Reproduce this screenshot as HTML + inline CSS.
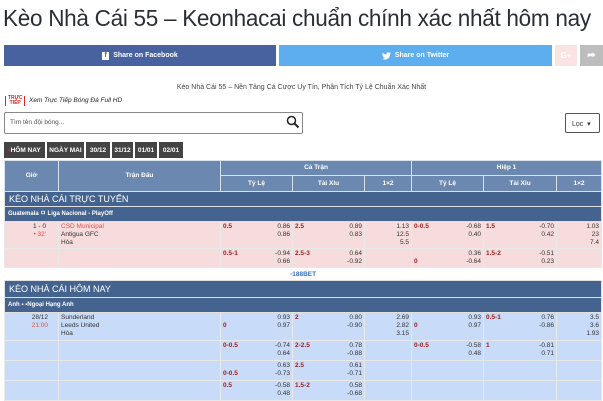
<!DOCTYPE html><html><head><meta charset="utf-8"><style>
*{margin:0;padding:0;box-sizing:border-box}
body{width:603px;height:400px;overflow:hidden;background:#fff;font-family:"Liberation Sans",sans-serif;position:relative;color:#333}
.a{position:absolute}
h1{position:absolute;left:3px;top:5px;font-size:23px;font-weight:normal;color:#2a2f35;letter-spacing:-0.3px;white-space:nowrap;transform:scaleX(0.98);transform-origin:left top}
.btn{position:absolute;top:45px;height:21px;color:#fff;font-size:7px;font-weight:bold;display:flex;align-items:center;justify-content:center;gap:4px}
table{position:absolute;left:4px;border-collapse:collapse;table-layout:fixed;width:597px;font-size:6.5px}
td{border:1px solid #e8e8e8;vertical-align:top;padding:1px 2px;line-height:8px}
.h td{background:#6b88b0;color:#fff;font-weight:bold;text-align:center;vertical-align:middle;border-color:#d8e0ea}
.sec td{background:#44648f;color:#fff;font-size:9px;padding:3px 4px;border-color:#e0e0e0}
.lg td{background:#44648f;color:#fff;font-weight:bold;font-size:6px;padding:3px 3px;border-color:#e0e0e0}
.pk td{background:#f6dcdc}
.bl td{background:#c8dbf8}
.r{text-align:right}.red{color:#9b1c1c;font-weight:bold}.lr{color:#e0504a}
.tab{position:absolute;top:142px;height:16px;background:#444;color:#fff;font-size:6.5px;font-weight:bold;display:flex;align-items:center;justify-content:center;white-space:nowrap}
</style></head><body>
<h1>Kèo Nhà Cái 55 – Keonhacai chuẩn chính xác nhất hôm nay</h1>
<div class="btn" style="left:4px;width:272px;background:#48629f"><span style="background:#fff;color:#48629f;width:7px;height:8px;font-size:7px;text-align:center;line-height:8px">f</span>Share on Facebook</div>
<div class="btn" style="left:279px;width:273px;background:#5caeee"><svg width="9" height="8" viewBox="0 0 24 20"><path d="M24 2.4a10 10 0 0 1-2.8.8A5 5 0 0 0 23.3.4a10 10 0 0 1-3.1 1.2A4.9 4.9 0 0 0 11.8 6 14 14 0 0 1 1.7.9a4.9 4.9 0 0 0 1.5 6.6A4.9 4.9 0 0 1 1 6.9a4.9 4.9 0 0 0 3.9 4.8 5 5 0 0 1-2.2.1 4.9 4.9 0 0 0 4.6 3.4A9.900 9.900 0 0 1 0 17.3 14 14 0 0 0 7.5 19.5c9 0 14-7.5 14-14v-.6A10 10 0 0 0 24 2.4z" fill="#fff"/></svg>Share on Twitter</div>
<div class="btn" style="left:555px;width:22px;background:#fbe3e3;color:#fff;font-size:8px">G+</div>
<div class="btn" style="left:580px;width:23px;background:#bdbdbd;font-size:10px">➦</div>
<div class="a" style="left:0;width:603px;top:84px;text-align:center;font-size:7px;color:#444">Kèo Nhà Cái 55 – Nền Tảng Cá Cược Uy Tín, Phân Tích Tỷ Lệ Chuẩn Xác Nhất</div>
<div class="a" style="left:5px;top:96px;font-size:5px;color:#d22;font-weight:bold;line-height:5px;text-align:center;border-left:1px solid #d22;border-right:1px solid #d22;padding:0 2px">TRỰC<br>TIẾP</div>
<div class="a" style="left:29px;top:97px;font-size:6.5px;font-style:italic;color:#222">Xem Trực Tiếp Bóng Đá Full HD</div>
<div class="a" style="left:4px;top:112px;width:299px;height:22px;border:1px solid #888;border-radius:2px;font-size:6.5px;color:#555;padding:6px 5px">Tìm tên đội bóng...</div>
<svg class="a" style="left:286px;top:115px" width="14" height="14" viewBox="0 0 14 14"><circle cx="5.5" cy="5.5" r="4" fill="none" stroke="#222" stroke-width="1.5"/><path d="M8.5 8.5L12.5 12.5" stroke="#222" stroke-width="2"/></svg>
<div class="a" style="left:565px;top:113px;width:35px;height:20px;border:1px solid #555;border-radius:2px;font-size:7px;padding:6px 6px">Lọc &nbsp;▾</div>
<div class="tab" style="left:4px;width:41px"><span style="color:#e22">•</span>HÔM NAY</div>
<div class="tab" style="left:47px;width:37px">NGÀY MAI</div>
<div class="tab" style="left:86px;width:24px">30/12</div>
<div class="tab" style="left:112px;width:21px">31/12</div>
<div class="tab" style="left:135px;width:22px">01/01</div>
<div class="tab" style="left:159px;width:24px">02/01</div>
<table style="top:160px">
<colgroup><col style="width:54px"><col style="width:162px"><col style="width:72px"><col style="width:72px"><col style="width:47px"><col style="width:72px"><col style="width:73px"><col style="width:45px"></colgroup>
<tr class="h" style="height:15px"><td rowspan="2">Giờ</td><td rowspan="2">Trận Đấu</td><td colspan="3">Cả Trận</td><td colspan="3">Hiệp 1</td></tr>
<tr class="h" style="height:16px"><td>Tỷ Lệ</td><td>Tài Xỉu</td><td>1×2</td><td>Tỷ Lệ</td><td>Tài Xỉu</td><td>1×2</td></tr>
<tr class="sec"><td colspan="8">KÈO NHÀ CÁI TRỰC TUYẾN</td></tr>
<tr class="lg"><td colspan="8">Guatemala ㅁ Liga Nacional - PlayOff</td></tr>
<tr class="pk" style="height:27px"><td class="r" style="padding-right:12px">1 - 0<br><span class="lr">• 32'</span></td><td><span class="lr">CSD Municipal</span><br>Antigua GFC<br>Hòa</td><td><span class="red" style="float:left">0.5</span><span style="float:right;text-align:right">0.86<br>0.86</span></td><td><span class="red" style="float:left">2.5</span><span style="float:right;text-align:right">0.89<br>0.83</span></td><td class="r">1.13<br>12.5<br>5.5</td><td><span class="red" style="float:left">0-0.5</span><span style="float:right;text-align:right">-0.68<br>0.40</span></td><td><span class="red" style="float:left">1.5</span><span style="float:right;text-align:right">-0.70<br>0.42</span></td><td class="r">1.03<br>23<br>7.4</td></tr>
<tr class="pk" style="height:19px"><td></td><td></td><td><span class="red" style="float:left">0.5-1</span><span style="float:right;text-align:right">-0.94<br>0.66</span></td><td><span class="red" style="float:left">2.5-3</span><span style="float:right;text-align:right">0.64<br>-0.92</span></td><td></td><td><span class="red" style="float:left"><br>0</span><span style="float:right;text-align:right">0.36<br>-0.64</span></td><td><span class="red" style="float:left">1.5-2</span><span style="float:right;text-align:right">-0.51<br>0.23</span></td><td></td></tr>
<tr style="height:13px"><td colspan="8" style="border:none;text-align:center;color:#3a6fc0;font-weight:bold;padding-top:3px">▫188BET</td></tr>
<tr class="sec"><td colspan="8" style="padding:4px">KÈO NHÀ CÁI HÔM NAY</td></tr>
<tr class="lg"><td colspan="8">Anh ▪ ▪Ngoại Hạng Anh</td></tr>
<tr class="bl" style="height:28px"><td class="r" style="padding-right:10px">28/12<br><span class="lr">21:00</span></td><td>Sunderland<br>Leeds United<br>Hòa</td><td><span class="red" style="float:left"><br>0</span><span style="float:right;text-align:right">0.93<br>0.97</span></td><td><span class="red" style="float:left">2</span><span style="float:right;text-align:right">0.80<br>-0.90</span></td><td class="r">2.69<br>2.82<br>3.15</td><td><span class="red" style="float:left"><br>0</span><span style="float:right;text-align:right">0.93<br>0.97</span></td><td><span class="red" style="float:left">0.5-1</span><span style="float:right;text-align:right">0.76<br>-0.86</span></td><td class="r">3.5<br>3.6<br>1.93</td></tr>
<tr class="bl" style="height:20px"><td></td><td></td><td><span class="red" style="float:left">0-0.5</span><span style="float:right;text-align:right">-0.74<br>0.64</span></td><td><span class="red" style="float:left">2-2.5</span><span style="float:right;text-align:right">0.78<br>-0.88</span></td><td></td><td><span class="red" style="float:left">0-0.5</span><span style="float:right;text-align:right">-0.58<br>0.48</span></td><td><span class="red" style="float:left">1</span><span style="float:right;text-align:right">-0.81<br>0.71</span></td><td></td></tr>
<tr class="bl" style="height:20px"><td></td><td></td><td><span class="red" style="float:left"><br>0-0.5</span><span style="float:right;text-align:right">0.63<br>-0.73</span></td><td><span class="red" style="float:left">2.5</span><span style="float:right;text-align:right">0.61<br>-0.71</span></td><td></td><td></td><td></td><td></td></tr>
<tr class="bl" style="height:20px"><td></td><td></td><td><span class="red" style="float:left">0.5</span><span style="float:right;text-align:right">-0.58<br>0.48</span></td><td><span class="red" style="float:left">1.5-2</span><span style="float:right;text-align:right">0.58<br>-0.68</span></td><td></td><td></td><td></td><td></td></tr>
</table>
</body></html>
